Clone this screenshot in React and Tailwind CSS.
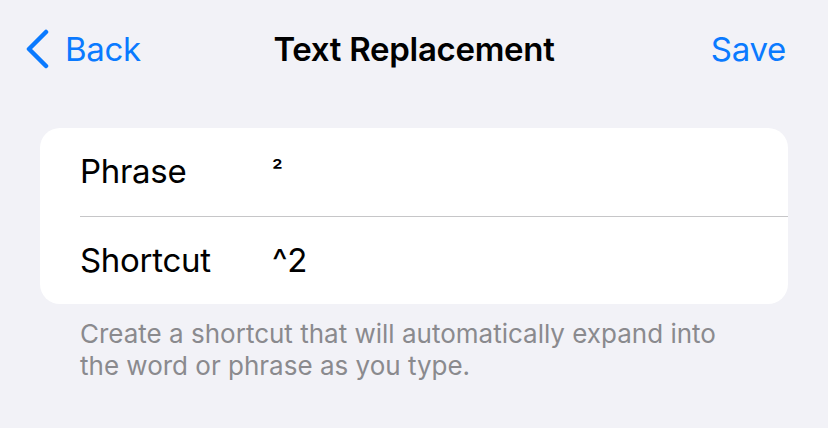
import React from 'react';

const Chevron = () => (
  <svg width="26" height="40" viewBox="0 0 26 40" className="shrink-0">
    <path
      d="M21 3 L4 20 L21 37"
      fill="none"
      stroke="#0a7aff"
      strokeWidth="4.5"
      strokeLinecap="round"
      strokeLinejoin="round"
    />
  </svg>
);

const Row = ({ label, value, valueClass, divider }) => (
  <div className={`flex items-center h-[88px] ${divider ? 'border-t border-[#c6c6c8]' : ''}`}>
    <span className="w-[192px] shrink-0 text-black">{label}</span>
    <span className={valueClass}>{value}</span>
  </div>
);

export default function App() {
  return (
    <div className="w-[828px] h-[428px] overflow-hidden bg-[#f2f2f7] font-['Inter',sans-serif] text-[33px] tracking-[-0.3px]">
      {/* navigation bar */}
      <div className="grid grid-cols-[1fr_auto_1fr] items-center h-[40px] mt-[29px] leading-[40px]">
        <div className="flex items-center gap-[14px] pl-[25px] text-[#0a7aff]">
          <Chevron />
          <span>Back</span>
        </div>
        <div className="font-semibold text-black">Text Replacement</div>
        <div className="flex justify-end pr-[42px] text-[#0a7aff]">Save</div>
      </div>

      {/* form card */}
      <div className="mx-[40px] mt-[59px] bg-white rounded-[20px]">
        <div className="pl-[40px]">
          <Row label="Phrase" value="²" valueClass="text-black text-[24px] font-medium -mt-[2px]" />
          <Row label="Shortcut" value="^2" valueClass="text-black" divider />
        </div>
      </div>

      <p className="w-[725px] pl-[80px] pt-[14px] text-[26px] leading-[32px] tracking-normal text-[#8a8a8e]">
        Create a shortcut that will automatically expand into the word or phrase as you type.
      </p>
    </div>
  );
}
